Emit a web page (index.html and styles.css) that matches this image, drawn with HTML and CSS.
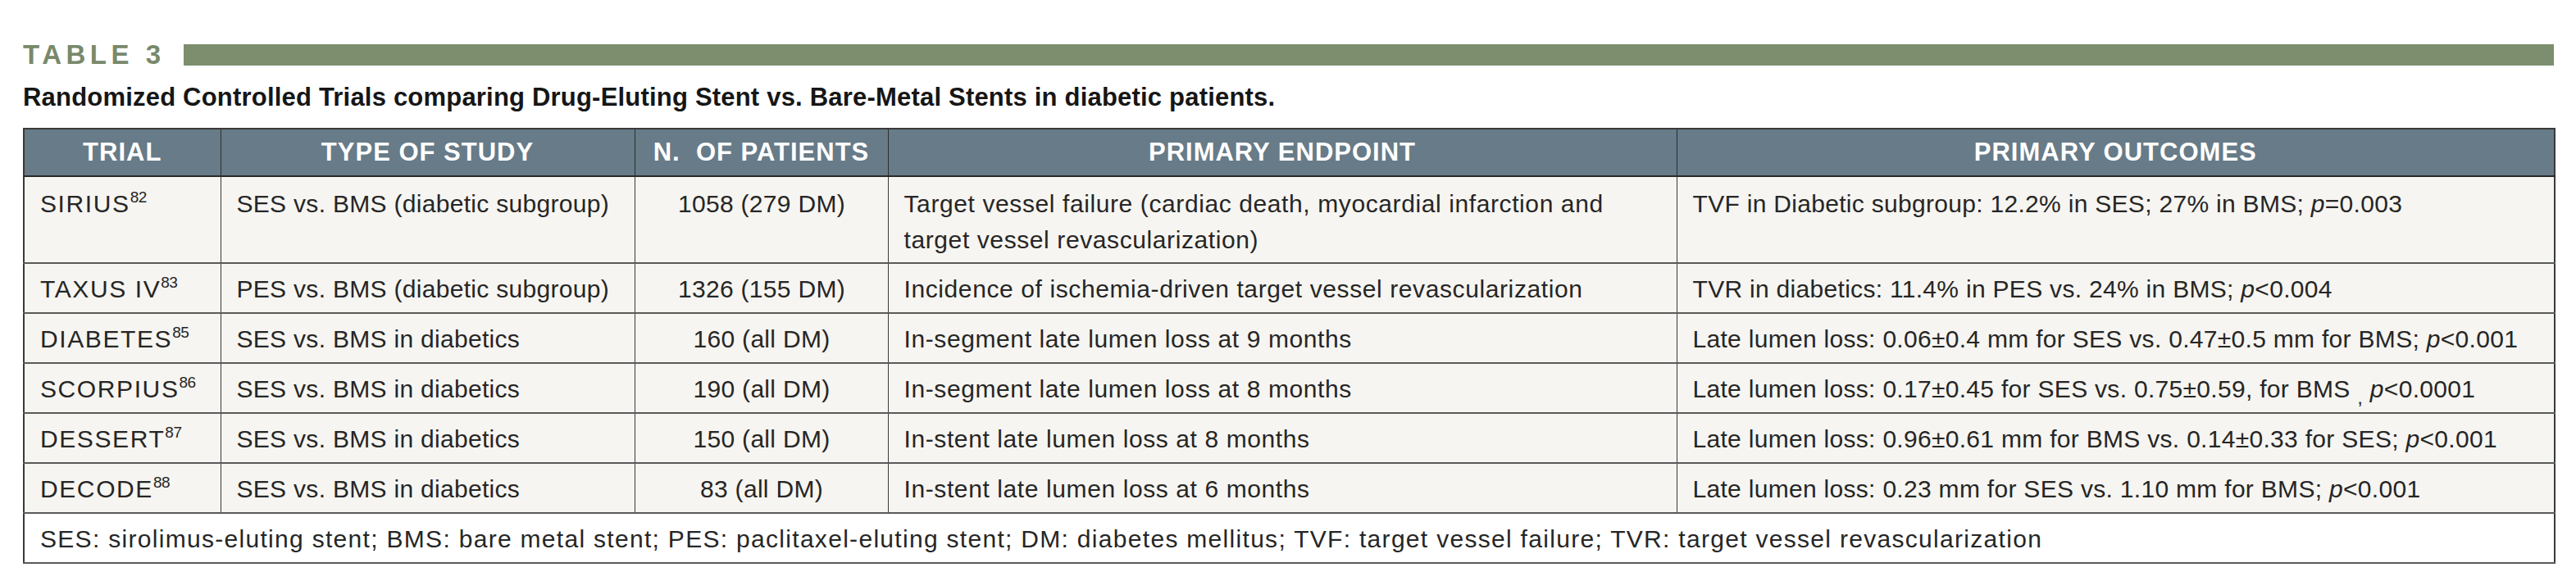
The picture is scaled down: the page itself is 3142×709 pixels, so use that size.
FILE: index.html
```html
<!DOCTYPE html>
<html lang="en">
<head>
<meta charset="utf-8">
<title>Table 3</title>
<link rel="stylesheet" href="styles.css">
</head>
<body>
<div class="page">
  <div class="title-row">
    <span class="title">TABLE 3</span>
    <span class="title-bar"></span>
  </div>
  <p class="subtitle">Randomized Controlled Trials comparing Drug-Eluting Stent vs. Bare-Metal Stents in diabetic patients.</p>
  <table class="trials">
    <colgroup>
      <col class="c-trial">
      <col class="c-type">
      <col class="c-n">
      <col class="c-end">
      <col class="c-out">
    </colgroup>
    <thead>
      <tr>
        <th>TRIAL</th>
        <th>TYPE OF STUDY</th>
        <th>N.&nbsp; OF PATIENTS</th>
        <th>PRIMARY ENDPOINT</th>
        <th>PRIMARY OUTCOMES</th>
      </tr>
    </thead>
    <tbody>
      <tr class="tall">
        <td class="trial">SIRIUS<sup>82</sup></td>
        <td>SES vs. BMS (diabetic subgroup)</td>
        <td class="num">1058 (279 DM)</td>
        <td class="endpoint">Target vessel failure (cardiac death, myocardial infarction and target vessel revascularization)</td>
        <td>TVF in Diabetic subgroup: 12.2% in SES; 27% in BMS; <i>p</i>=0.003</td>
      </tr>
      <tr>
        <td class="trial">TAXUS IV<sup>83</sup></td>
        <td>PES vs. BMS (diabetic subgroup)</td>
        <td class="num">1326 (155 DM)</td>
        <td class="endpoint">Incidence of ischemia-driven target vessel revascularization</td>
        <td>TVR in diabetics: 11.4% in PES vs. 24% in BMS; <i>p</i>&lt;0.004</td>
      </tr>
      <tr>
        <td class="trial">DIABETES<sup>85</sup></td>
        <td>SES vs. BMS in diabetics</td>
        <td class="num">160 (all DM)</td>
        <td class="endpoint">In-segment late lumen loss at 9 months</td>
        <td>Late lumen loss: 0.06±0.4 mm for SES vs. 0.47±0.5 mm for BMS; <i>p</i>&lt;0.001</td>
      </tr>
      <tr>
        <td class="trial">SCORPIUS<sup>86</sup></td>
        <td>SES vs. BMS in diabetics</td>
        <td class="num">190 (all DM)</td>
        <td class="endpoint">In-segment late lumen loss at 8 months</td>
        <td>Late lumen loss: 0.17±0.45 for SES vs. 0.75±0.59, for BMS <sub>,</sub> <i>p</i>&lt;0.0001</td>
      </tr>
      <tr>
        <td class="trial">DESSERT<sup>87</sup></td>
        <td>SES vs. BMS in diabetics</td>
        <td class="num">150 (all DM)</td>
        <td class="endpoint">In-stent late lumen loss at 8 months</td>
        <td>Late lumen loss: 0.96±0.61 mm for BMS vs. 0.14±0.33 for SES; <i>p</i>&lt;0.001</td>
      </tr>
      <tr>
        <td class="trial">DECODE<sup>88</sup></td>
        <td>SES vs. BMS in diabetics</td>
        <td class="num">83 (all DM)</td>
        <td class="endpoint">In-stent late lumen loss at 6 months</td>
        <td>Late lumen loss: 0.23 mm for SES vs. 1.10 mm for BMS; <i>p</i>&lt;0.001</td>
      </tr>
    </tbody>
    <tfoot>
      <tr>
        <td colspan="5">SES: sirolimus-eluting stent; BMS: bare metal stent; PES: paclitaxel-eluting stent; DM: diabetes mellitus; TVF: target vessel failure; TVR: target vessel revascularization</td>
      </tr>
    </tfoot>
  </table>
</div>
</body>
</html>
```

FILE: styles.css
```css
html, body {
  margin: 0;
  padding: 0;
  background: #ffffff;
}

.page {
  padding: 50px 27px 0 28px;
  font-family: "Liberation Sans", Arial, sans-serif;
  color: #222;
}

.title-row {
  display: flex;
  align-items: center;
  gap: 22px;
}

.title {
  font-size: 33px;
  line-height: 33px;
  font-weight: 700;
  letter-spacing: 5.5px;
  color: #78896b;
  white-space: nowrap;
}

.title-bar {
  flex: 1;
  height: 26px;
  background: #7c8e6e;
}

.subtitle {
  margin: 16px 0 17px 0;
  font-size: 31px;
  line-height: 40px;
  font-weight: 700;
  letter-spacing: 0.2px;
  color: #161616;
}

.trials {
  width: 3087px;
  border-collapse: collapse;
  table-layout: fixed;
  border: 2px solid #3a3a3a;
}

.c-trial { width: 240px; }
.c-type { width: 505px; }
.c-n { width: 309px; }
.c-end { width: 962px; }
.c-out { width: 1071px; }

.trials th {
  background: #677b88;
  color: #ffffff;
  font-size: 31px;
  line-height: 42px;
  font-weight: 700;
  letter-spacing: 1px;
  padding: 7px 10px 7px 10px;
  text-align: center;
  border: 1px solid #2e2e2e;
  border-bottom: 2px solid #2a2a2a;
}

.trials td {
  background: #f6f5f1;
  font-size: 30px;
  letter-spacing: 0.3px;
  line-height: 44px;
  padding: 9px 18px 6px 19px;
  vertical-align: top;
  text-align: left;
  color: #262626;
  border-left: 1px solid #3a3a3a;
  border-right: 1px solid #3a3a3a;
  border-top: 2px solid #5a5a5a;
  border-bottom: 2px solid #5a5a5a;
}

.trials tr.tall td {
  padding-top: 11px;
  padding-bottom: 5px;
}

.trials td.trial {
  letter-spacing: 1.6px;
  padding-right: 4px;
}

.trials td.num {
  text-align: center;
}

.trials td.endpoint {
  letter-spacing: 0.6px;
  padding-right: 60px;
}

.trials sup {
  font-size: 19px;
  line-height: 0;
  vertical-align: 12px;
  letter-spacing: -0.5px;
}

.trials sub {
  font-size: 24px;
  line-height: 0;
  vertical-align: -8px;
}

.trials i {
  font-style: italic;
}

.trials tfoot td {
  background: #ffffff;
  border-top: 2px solid #333;
  letter-spacing: 1.3px;
}
```
